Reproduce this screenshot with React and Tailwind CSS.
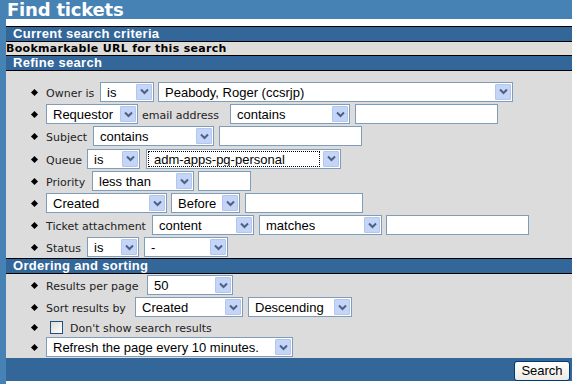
import React from "react";

const F13 = { fontFamily: '"Liberation Sans", Arial, sans-serif' };
const VER = { fontFamily: '"DejaVu Sans", Verdana, sans-serif' };

function Chevron() {
  return (
    <svg width="9" height="7" viewBox="0 0 9 7">
      <path d="M1 1.5 L4.5 5 L8 1.5" stroke="#4d6185" strokeWidth="2" fill="none" />
    </svg>
  );
}

function Sel({ w, text, focused, ml = 0 }) {
  return (
    <div
      className="h-[20px] shrink-0 border border-[#7f9db9] bg-white flex items-stretch text-[13px] text-black leading-none"
      style={{ width: w, marginLeft: ml, ...F13 }}
    >
      <div className="flex-1 flex items-center pl-[1px] pr-[2px] py-[1px] min-w-0">
        <div
          className={
            "h-full w-full flex items-center pl-[5px] pt-[1px] whitespace-nowrap overflow-hidden " +
            (focused ? "border border-dotted border-black" : "")
          }
        >
          {text}
        </div>
      </div>
      <div className="w-[16px] m-[1px] bg-[#c4d5f8] border border-[#b3c6ee] rounded-[1px] flex items-center justify-center">
        <Chevron />
      </div>
    </div>
  );
}

function Inp({ w, ml = 0 }) {
  return (
    <div
      className="h-[20px] shrink-0 border border-[#7f9db9] bg-white"
      style={{ width: w, marginLeft: ml }}
    />
  );
}

function Label({ children, w, ml = 0 }) {
  return (
    <span
      className="block shrink-0 h-[20px] pt-[3px] leading-[18px] text-[11px] text-[#222] whitespace-nowrap"
      style={{ ...VER, width: w, marginLeft: ml }}
    >
      {children}
    </span>
  );
}

function Row({ children, h = 22 }) {
  return (
    <div className="flex items-center" style={{ height: h }}>
      <div className="w-[40px] shrink-0 flex justify-end pr-[9px] pt-[1px]">
        <div className="w-[5px] h-[5px] bg-black rotate-45" />
      </div>
      <div className="flex items-center">{children}</div>
    </div>
  );
}

function Bar({ children }) {
  return (
    <div
      className="h-[15px] shrink-0 bg-[#336699] text-white font-bold text-[13px] leading-[14px] pl-[7px] border-b border-black tracking-[0.3px]"
      style={F13}
    >
      {children}
    </div>
  );
}

export default function App() {
  return (
    <div className="w-[572px] h-[384px] overflow-hidden bg-[#4682b4] flex flex-col">
      <div
        className="h-[19px] shrink-0 pl-[7px] text-white font-bold text-[18px] leading-[19px] tracking-[-0.2px]"
        style={VER}
      >
        Find tickets
      </div>
      <div className="flex-1 ml-[6px] bg-white flex flex-col">
        <div className="h-[7px] shrink-0" />
        <div className="border-t border-black shrink-0 flex flex-col">
          <Bar>Current search criteria</Bar>
        </div>
        <div
          className="h-[14px] shrink-0 bg-[#dfddd9] border-b border-black text-[11px] font-bold text-black leading-[13px] tracking-[0.3px]"
          style={VER}
        >
          Bookmarkable URL for this search
        </div>
        <Bar>Refine search</Bar>
        <div className="h-[188px] shrink-0 bg-[#dcdcdc] border-b border-black pt-[9px] flex flex-col">
          <Row h={23}>
            <Label w={54}>Owner is</Label>
            <Sel w={54} text="is" />
            <Sel ml={4} w={355} text="Peabody, Roger (ccsrjp)" />
          </Row>
          <Row>
            <Sel w={92} text="Requestor" />
            <Label ml={4} w={88}>email address</Label>
            <Sel w={120} text="contains" />
            <Inp ml={5} w={143} />
          </Row>
          <Row>
            <Label w={47}>Subject</Label>
            <Sel w={121} text="contains" />
            <Inp ml={5} w={143} />
          </Row>
          <Row h={23}>
            <Label w={41}>Queue</Label>
            <Sel w={53} text="is" />
            <Sel ml={6} w={195} text="adm-apps-pg-personal" focused />
          </Row>
          <Row>
            <Label w={46}>Priority</Label>
            <Sel w={102} text="less than" />
            <Inp ml={4} w={53} />
          </Row>
          <Row>
            <Sel w={121} text="Created" />
            <Sel ml={4} w={69} text="Before" />
            <Inp ml={5} w={118} />
          </Row>
          <Row>
            <Label w={106}>Ticket attachment</Label>
            <Sel w={102} text="content" />
            <Sel ml={5} w={123} text="matches" />
            <Inp ml={4} w={143} />
          </Row>
          <Row>
            <Label w={41}>Status</Label>
            <Sel w={52} text="is" />
            <Sel ml={5} w={84} text="-" />
          </Row>
        </div>
        <Bar>Ordering and sorting</Bar>
        <div className="h-[84px] shrink-0 bg-[#dcdcdc] flex flex-col overflow-hidden">
          <Row>
            <Label w={101}>Results per page</Label>
            <Sel w={86} text="50" />
          </Row>
          <Row>
            <Label w={89}>Sort results by</Label>
            <Sel w={108} text="Created" />
            <Sel ml={5} w={104} text="Descending" />
          </Row>
          <Row h={18}>
            <div className="ml-[4px] w-[13px] h-[13px] border border-[#1c5180] bg-gradient-to-br from-[#dcdcd7] to-white" />
            <Label ml={7}>Don't show search results</Label>
          </Row>
          <Row h={22}>
            <Sel w={247} text="Refresh the page every 10 minutes." />
          </Row>
        </div>
        <div className="h-[23px] shrink-0 bg-[#336699] flex items-center justify-end pr-[2px]">
          <div
            className="h-[20px] w-[56px] mt-[3px] border border-[#003c74] rounded-[3px] bg-gradient-to-b from-white to-[#ecebe6] text-[13px] text-black flex items-center justify-center"
            style={F13}
          >
            Search
          </div>
        </div>
        <div className="flex-1 bg-white" />
      </div>
    </div>
  );
}
